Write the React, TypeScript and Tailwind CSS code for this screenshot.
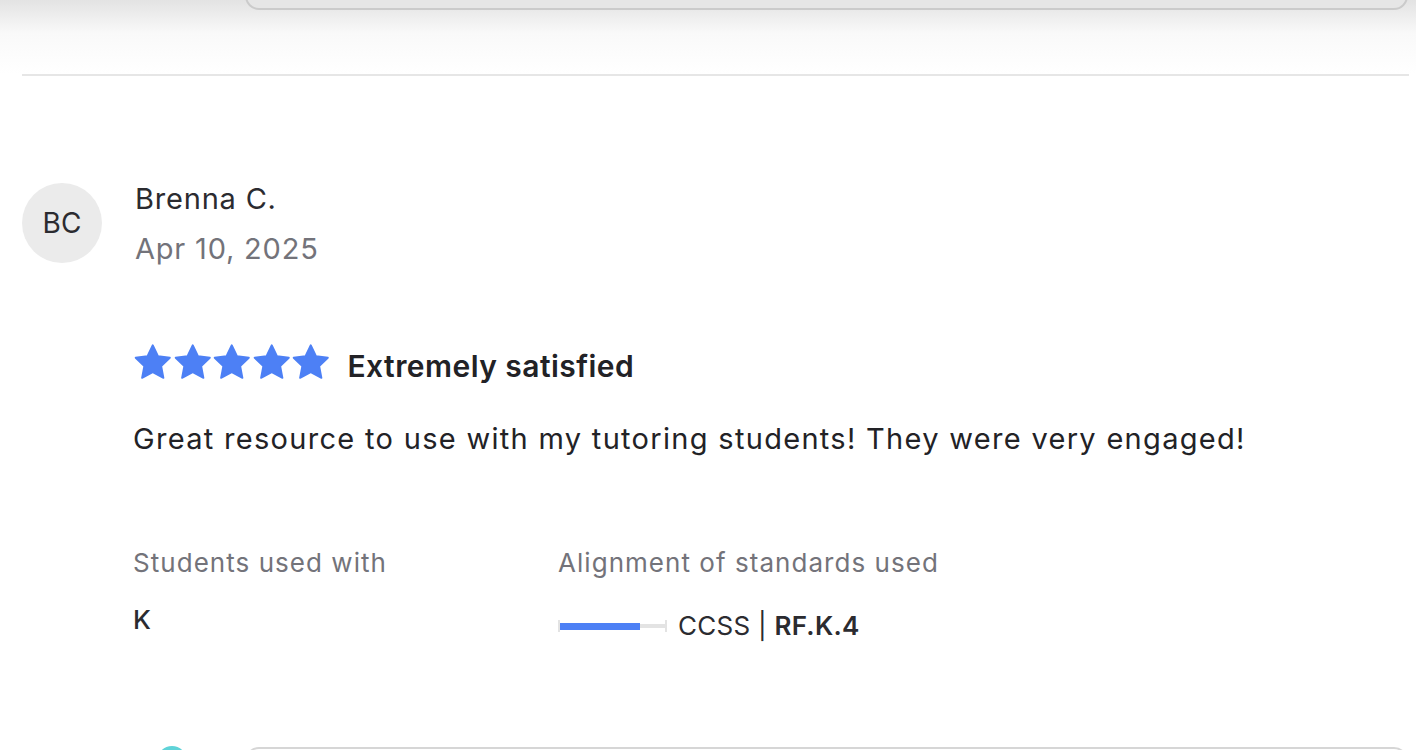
const font = { fontFamily: "Inter, 'Noto Sans', sans-serif" };

function Stars() {
  return (
    <div className="flex items-center">
      {[0, 1, 2, 3, 4].map((i) => (
        <svg key={i} viewBox="0 0 24 24" className="h-[40px] w-[39.5px]">
          <path
            d="M12 1.2l3.2 6.6 7.2 1-5.25 5.05 1.35 7.2L12 17.6l-6.5 3.45 1.35-7.2L1.6 8.8l7.2-1z"
            fill="#4d80f5"
            stroke="#4d80f5"
            strokeWidth="1.1"
            strokeLinejoin="round"
          />
        </svg>
      ))}
    </div>
  );
}

export default function App() {
  return (
    <div
      className="relative h-[750px] w-[1416px] overflow-hidden bg-white text-[#2b2b30] tracking-[0.05em]"
      style={font}
    >
      {/* Sticky header shadow with the bottom of the previous box */}
      <div className="relative h-[74px] bg-gradient-to-b from-[#e3e3e3] via-[#f9f9f9] via-45% to-white">
        <div className="absolute -top-[40px] left-[245px] right-[8px] h-[50px] rounded-[14px] border-2 border-[#cbcbcb] bg-[#e6e6e6]" />
      </div>

      <div className="ml-[22px] mr-[7px] border-t-2 border-[#e6e6e6]" />

      {/* Review */}
      <article className="pl-[22px] pt-[105px]">
        <div className="flex items-start gap-[33px]">
          <div className="mt-[2px] flex h-[80px] w-[80px] shrink-0 items-center justify-center rounded-full bg-[#ebebeb] text-[28px] tracking-normal text-[#2b2b30]">
            BC
          </div>
          <div className="-mt-[7px] text-[29px] leading-[50px]">
            <div className="text-[#2b2b30]">Brenna C.</div>
            <div className="text-[#73737a]">Apr 10, 2025</div>
          </div>
        </div>

        <div className="ml-[111px] mt-[66px] flex items-center gap-[17px]">
          <Stars />
          <span className="mt-[6px] text-[30px] font-semibold leading-[40px] tracking-[0.015em] text-[#222226]">
            Extremely satisfied
          </span>
        </div>

        <p className="ml-[111px] mt-[33px] text-[29px] leading-[40px] tracking-[0.045em] text-[#222226]">
          Great resource to use with my tutoring students! They were very engaged!
        </p>

        <div className="ml-[111px] mt-[86px] flex">
          <div className="w-[425px]">
            <div className="text-[26px] leading-[36px] tracking-[0.04em] text-[#73737a]">
              Students used with
            </div>
            <div className="mt-[21px] text-[26px] font-medium leading-[36px] text-[#2b2b30]">K</div>
          </div>
          <div>
            <div className="text-[26px] leading-[36px] tracking-[0.04em] text-[#73737a]">
              Alignment of standards used
            </div>
            <div className="mt-[27px] flex items-center gap-[11px]">
              <div className="flex h-[12px] w-[109px] items-center border-x-2 border-[#e3e3e3]">
                <div className="h-[7px] w-[80px] bg-[#4d80f5]" />
                <div className="h-[4px] flex-1 bg-[#e3e3e3]" />
              </div>
              <span className="text-[26px] leading-[36px] tracking-[0.01em] text-[#2b2b30]">
                CCSS | <span className="font-semibold">RF.K.4</span>
              </span>
            </div>
          </div>
        </div>
      </article>

      {/* Top of next review */}
      <div className="absolute left-0 right-0 top-[746px] flex items-start">
        <div className="ml-[157px] flex h-[30px] w-[30px] items-center justify-center rounded-full bg-[#5fd3d8]">
          <div className="h-[20px] w-[16px] rounded-full bg-[#1f2a33]" />
        </div>
        <div className="ml-[58px] mr-[8px] mt-[1px] h-[40px] flex-1 rounded-[14px] border-2 border-[#d6d6d6]" />
      </div>
    </div>
  );
}
